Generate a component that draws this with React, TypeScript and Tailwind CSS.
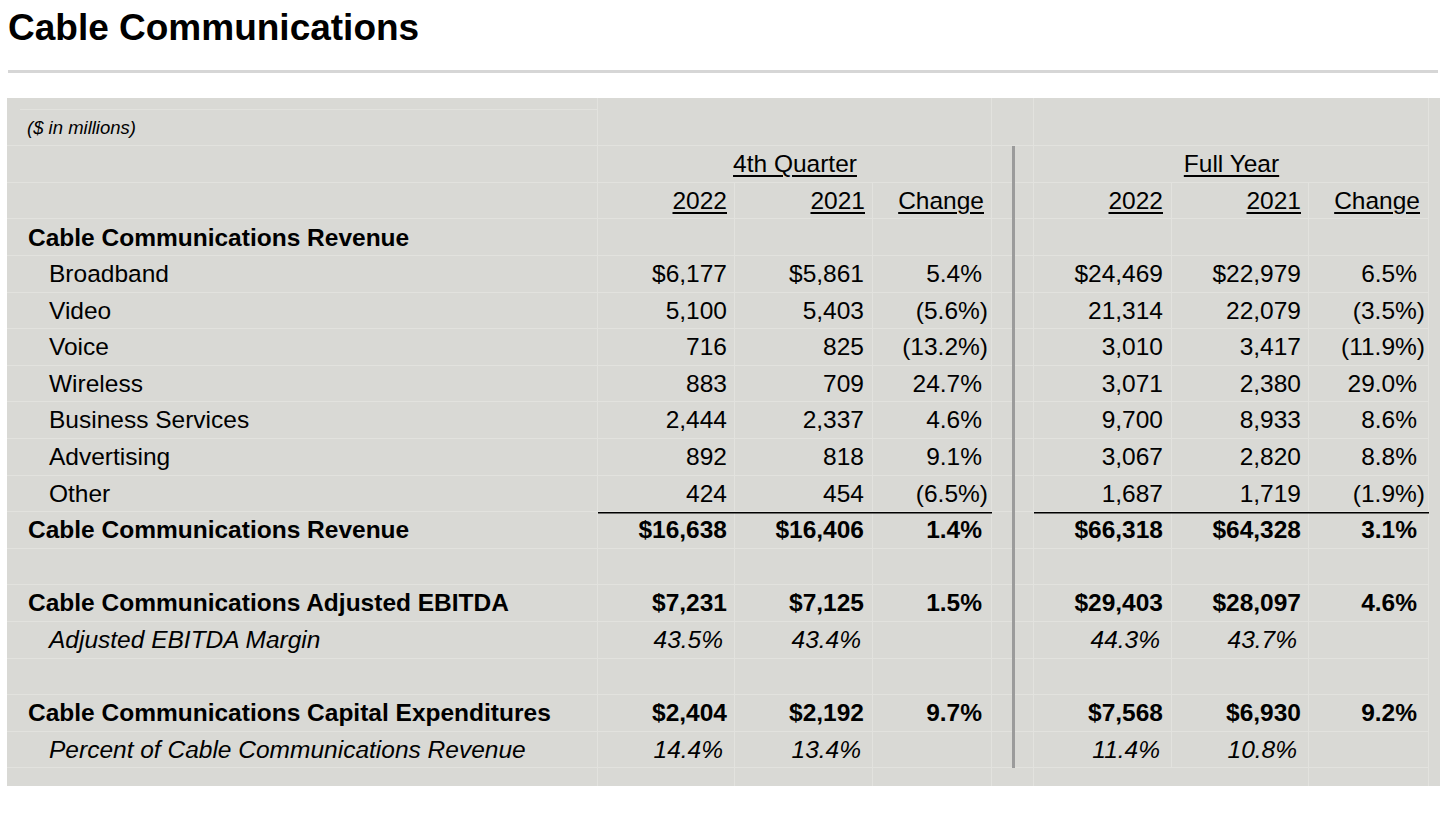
import React from "react";

const grid = "shadow-[inset_-1px_-1px_0_#e2e2de]";
const font = "font-['Liberation_Sans',Arial,sans-serif]";

type Kind = "plain" | "bold" | "italic" | "blank" | "group";

interface Line {
  label?: string;
  kind: Kind;
  q?: string[];
  fy?: string[];
  total?: boolean;
}

const rows: Line[] = [
  { label: "Cable Communications Revenue", kind: "group" },
  { label: "Broadband", kind: "plain", q: ["$6,177", "$5,861", "5.4%"], fy: ["$24,469", "$22,979", "6.5%"] },
  { label: "Video", kind: "plain", q: ["5,100", "5,403", "(5.6%)"], fy: ["21,314", "22,079", "(3.5%)"] },
  { label: "Voice", kind: "plain", q: ["716", "825", "(13.2%)"], fy: ["3,010", "3,417", "(11.9%)"] },
  { label: "Wireless", kind: "plain", q: ["883", "709", "24.7%"], fy: ["3,071", "2,380", "29.0%"] },
  { label: "Business Services", kind: "plain", q: ["2,444", "2,337", "4.6%"], fy: ["9,700", "8,933", "8.6%"] },
  { label: "Advertising", kind: "plain", q: ["892", "818", "9.1%"], fy: ["3,067", "2,820", "8.8%"] },
  { label: "Other", kind: "plain", q: ["424", "454", "(6.5%)"], fy: ["1,687", "1,719", "(1.9%)"] },
  { label: "Cable Communications Revenue", kind: "bold", total: true, q: ["$16,638", "$16,406", "1.4%"], fy: ["$66,318", "$64,328", "3.1%"] },
  { kind: "blank" },
  { label: "Cable Communications Adjusted EBITDA", kind: "bold", q: ["$7,231", "$7,125", "1.5%"], fy: ["$29,403", "$28,097", "4.6%"] },
  { label: "Adjusted EBITDA Margin", kind: "italic", q: ["43.5%", "43.4%", ""], fy: ["44.3%", "43.7%", ""] },
  { kind: "blank" },
  { label: "Cable Communications Capital Expenditures", kind: "bold", q: ["$2,404", "$2,192", "9.7%"], fy: ["$7,568", "$6,930", "9.2%"] },
  { label: "Percent of Cable Communications Revenue", kind: "italic", q: ["14.4%", "13.4%", ""], fy: ["11.4%", "10.8%", ""] },
];

// widths of the three value columns on each side
const qW = ["w-[137px]", "w-[138px]", "w-[119px]"];
const fyW = ["w-[138px]", "w-[137px]", "w-[120px]"];

function pad(side: "q" | "fy", i: number, v: string, kind: Kind) {
  if (kind === "italic") return "pr-[12px]";
  if (i < 2) {
    if (side === "q") return i === 0 ? "pr-[8px]" : "pr-[9px]";
    return i === 0 ? "pr-[9px]" : "pr-[8px]";
  }
  const neg = v.startsWith("(");
  if (side === "q") return neg ? "pr-[4px]" : "pr-[10px]";
  return neg ? "pr-[4px]" : "pr-[12px]";
}

function Sep({ show = true }: { show?: boolean }) {
  return (
    <div className={`w-[42px] shrink-0 pl-[20px] ${grid}`}>
      {show && <div className="h-full w-[3px] bg-[#9b9b9b]" />}
    </div>
  );
}

function ValueCells({ side, vals, kind, total }: { side: "q" | "fy"; vals?: string[]; kind: Kind; total?: boolean }) {
  const widths = side === "q" ? qW : fyW;
  const shadow = total
    ? "shadow-[inset_0_1.5px_0_#000,inset_-1px_-1px_0_#e2e2de]"
    : grid;
  return (
    <>
      {widths.map((w, i) => {
        const v = vals?.[i] ?? "";
        return (
          <div
            key={i}
            className={`${w} shrink-0 flex items-center justify-end ${shadow} ${pad(side, i, v, kind)}`}
          >
            {v}
          </div>
        );
      })}
    </>
  );
}

function Row({ line }: { line: Line }) {
  const weight =
    line.kind === "bold" || line.kind === "group"
      ? "font-bold"
      : line.kind === "italic"
        ? "italic"
        : "";
  const indent = line.kind === "bold" || line.kind === "group" ? "pl-[8px]" : "pl-[29px]";
  return (
    <div className={`flex h-[36.6px] ${weight}`}>
      <div className="w-[13px] shrink-0 shadow-[inset_0_-1px_0_#e2e2de]" />
      <div className={`w-[578px] shrink-0 flex items-center ${indent} ${grid}`}>{line.label}</div>
      <ValueCells side="q" vals={line.q} kind={line.kind} total={line.total} />
      <Sep />
      <ValueCells side="fy" vals={line.fy} kind={line.kind} total={line.total} />
      <div className="w-[11px] shrink-0" />
    </div>
  );
}

function HeadCells({ widths, side }: { widths: string[]; side: "q" | "fy" }) {
  const labels = ["2022", "2021", "Change"];
  const pads =
    side === "q" ? ["pr-[8px]", "pr-[8px]", "pr-[8px]"] : ["pr-[9px]", "pr-[8px]", "pr-[9px]"];
  return (
    <>
      {widths.map((w, i) => (
        <div key={i} className={`${w} shrink-0 flex items-center justify-end ${grid} ${pads[i]}`}>
          <span className="underline underline-offset-[3px] decoration-[1.5px]">{labels[i]}</span>
        </div>
      ))}
    </>
  );
}

export default function App() {
  return (
    <div className={`min-h-screen w-[1456px] bg-white text-black ${font}`}>
      <h1 className="pl-[8px] pt-[9px] text-[37px] font-bold leading-none">Cable Communications</h1>
      <div className="ml-[8px] mt-[23.5px] h-[3px] w-[1430px] bg-[#d6d6d6]" />

      <div className="ml-[7px] mt-[25.5px] w-[1433px] bg-[#d9d9d5] text-[24.5px] leading-none">
        {/* top strip */}
        <div className="flex h-[11.7px]">
          <div className="w-[13px] shrink-0" />
          <div className={`w-[578px] shrink-0 ${grid}`} />
          <div className="w-[394px] shrink-0 shadow-[inset_-1px_0_0_#e2e2de]" />
          <div className="w-[42px] shrink-0 shadow-[inset_-1px_0_0_#e2e2de]" />
          <div className="w-[395px] shrink-0 shadow-[inset_-1px_0_0_#e2e2de]" />
        </div>

        {/* note */}
        <div className="flex h-[36.6px]">
          <div className="w-[13px] shrink-0 shadow-[inset_0_-1px_0_#e2e2de]" />
          <div className={`w-[578px] shrink-0 flex items-center pl-[7px] text-[18.5px] italic ${grid}`}>
            ($ in millions)
          </div>
          <div className={`w-[394px] shrink-0 ${grid}`} />
          <div className={`w-[42px] shrink-0 ${grid}`} />
          <div className={`w-[395px] shrink-0 ${grid}`} />
        </div>

        {/* periods */}
        <div className="flex h-[36.6px]">
          <div className="w-[13px] shrink-0 shadow-[inset_0_-1px_0_#e2e2de]" />
          <div className={`w-[578px] shrink-0 ${grid}`} />
          <div className={`w-[394px] shrink-0 flex items-center justify-center ${grid}`}>
            <span className="underline underline-offset-[3px] decoration-[1.5px]">4th Quarter</span>
          </div>
          <Sep />
          <div className={`w-[395px] shrink-0 flex items-center justify-center ${grid}`}>
            <span className="underline underline-offset-[3px] decoration-[1.5px]">Full Year</span>
          </div>
          <div className="w-[11px] shrink-0" />
        </div>

        {/* years */}
        <div className="flex h-[36.6px]">
          <div className="w-[13px] shrink-0 shadow-[inset_0_-1px_0_#e2e2de]" />
          <div className={`w-[578px] shrink-0 ${grid}`} />
          <HeadCells widths={qW} side="q" />
          <Sep />
          <HeadCells widths={fyW} side="fy" />
          <div className="w-[11px] shrink-0" />
        </div>

        {rows.map((r, i) => (
          <Row key={i} line={r} />
        ))}

        {/* bottom strip */}
        <div className="flex h-[17.5px]">
          <div className="w-[13px] shrink-0" />
          <div className={`w-[578px] shrink-0 shadow-[inset_-1px_0_0_#e2e2de]`} />
          <div className="w-[137px] shrink-0 shadow-[inset_-1px_0_0_#e2e2de]" />
          <div className="w-[138px] shrink-0 shadow-[inset_-1px_0_0_#e2e2de]" />
          <div className="w-[119px] shrink-0 shadow-[inset_-1px_0_0_#e2e2de]" />
          <div className="w-[42px] shrink-0 shadow-[inset_-1px_0_0_#e2e2de]" />
          <div className="w-[275px] shrink-0 shadow-[inset_-1px_0_0_#e2e2de]" />
          <div className="w-[120px] shrink-0 shadow-[inset_-1px_0_0_#e2e2de]" />
        </div>
      </div>
    </div>
  );
}
